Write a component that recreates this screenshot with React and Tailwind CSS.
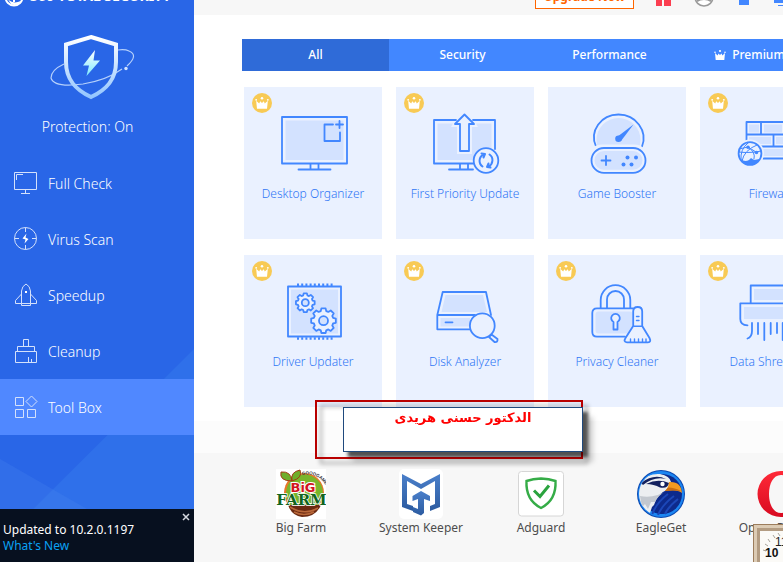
import React from "react";

function Crown({ className }) {
  return (
    <svg viewBox="0 0 12 11" className={className} fill="currentColor">
      <path d="M1 3.5 L3.6 6 L4.5 4 L6 5.5 L7.5 4 L8.4 6 L11 3.5 L10.3 10.5 H1.7 Z" />
      <circle cx="1" cy="2.8" r="0.8" />
      <circle cx="6" cy="1.5" r="1.1" />
      <circle cx="11" cy="2.8" r="0.8" />
    </svg>
  );
}

// Tool icons

function ToolSvg({ children }) {
  return (
    <svg width="80" height="72" viewBox="0 0 80 72" fill="none" stroke="#4287ff" strokeWidth="1.8" strokeLinejoin="round" strokeLinecap="round">
      {children}
    </svg>
  );
}

function DesktopIcon() {
  return (
    <ToolSvg>
      <rect x="9" y="8" width="65" height="46.5" />
      <rect x="12.5" y="11.5" width="58" height="39.5" fill="#d3e2ff" stroke="none" />
      <path d="M37.5 55 V60 M45.5 55 V60 M25.5 60.5 H57.5" />
      <path d="M60 15.5 H51.5 V32 H67 V23.5 M66.5 12 V19 M63 15.5 H70" />
    </ToolSvg>
  );
}

function PriorityIcon() {
  return (
    <ToolSvg>
      <path d="M31 11 H9 V54.5 H50 M48 11 H70 V40 M35 55 V60 M43 55 V60 M24 60.5 H48" />
      <path d="M12.5 14.5 H28 L26 18 H32 V45 H47 V18 H53 L51 14.5 H66.5 V39 Q52 38 48 51 H12.5 Z" fill="#d3e2ff" stroke="none" />
      <path d="M39.5 5.5 L49 15 H44 V42 H35 V15 H30 Z" fill="#eaf1ff" />
      <circle cx="61" cy="51.5" r="12.3" fill="#eaf1ff" />
      <path d="M57.5 57.5 A7 7 0 0 1 58.5 45.5 M56.5 44.5 L60 45 L58.5 48.5 M64.5 45.5 A7 7 0 0 1 63.5 57.5 M65.5 58.5 L62 58 L63.5 54.5" strokeWidth="2" />
    </ToolSvg>
  );
}

function GameIcon() {
  return (
    <ToolSvg>
      <circle cx="41.5" cy="31" r="22" fill="#d3e2ff" stroke="none" />
      <path d="M19 37.5 C12 22 24 5.5 41.5 5.5 S71 22 65 37.5" />
      <path d="M56.5 15.5 L44 32 L40 28 Z" fill="#4287ff" stroke="none" />
      <circle cx="41.5" cy="29.8" r="3.3" fill="#4287ff" stroke="none" />
      <rect x="10" y="35.5" width="62" height="30" rx="15" fill="#eaf1ff" stroke="none" />
      <rect x="14.5" y="39" width="54" height="24.8" rx="12.4" />
      <rect x="17.5" y="42" width="48" height="18.8" rx="9.4" fill="#d3e2ff" stroke="none" />
      <path d="M29 47 V56 M24.5 51.5 H33.5" />
      <g fill="#4287ff" stroke="none">
        <circle cx="50.5" cy="48.5" r="2" />
        <circle cx="59" cy="48.5" r="2" />
        <circle cx="46.5" cy="55.5" r="2" />
        <circle cx="54.5" cy="55.5" r="2" />
      </g>
    </ToolSvg>
  );
}

function FirewallIcon() {
  return (
    <ToolSvg>
      <path d="M20 15.5 h10 v8 h-10z M35 15.5 h18 v8 h-18z M20 28 h22 v7 h-22z M47 28 h18 v7 h-18z M34 40 h30 v7 h-30z" fill="#d3e2ff" stroke="none" />
      <path d="M17.5 32 V13 H76 V49.5 H34 M17.5 25.5 H76 M30 37.5 H76 M32 13 V25.5 M56 13 V25.5 M44.5 25.5 V37.5" />
      <circle cx="21" cy="44.5" r="14" fill="#eaf1ff" stroke="none" />
      <circle cx="21" cy="44.5" r="11.4" fill="#eaf1ff" />
      <g strokeWidth="1">
        <path d="M10 43 Q16 44 27 43 M19 34 Q11 40 12 51 M19 38 Q27 43 25 50 M28 36 Q15 41 13 52 M10 40 L19 38 L27 43 L32 42" />
      </g>
      <path d="M12 50.5 Q16 53 20 51 L22 49 L25 51 L30.5 50 Q27 56 21 56 Q15 56 12 50.5 Z" fill="#4287ff" stroke="none" />
      <circle cx="19" cy="38.3" r="1.8" fill="#4287ff" stroke="none" />
      <circle cx="27.5" cy="43.5" r="1.8" fill="#4287ff" stroke="none" />
    </ToolSvg>
  );
}

// A toothed ring round (cx, cy)
function Gear({ cx, cy, r, hole }) {
  const points = [];
  for (let i = 0; i < 8; i++) {
    const a = (i * Math.PI) / 4;
    [[-0.28, 0.8], [-0.17, 1], [0.17, 1], [0.28, 0.8]].forEach(([d, k]) => {
      points.push(`${(cx + Math.cos(a + d) * r * k).toFixed(2)},${(cy + Math.sin(a + d) * r * k).toFixed(2)}`);
    });
  }
  return (
    <>
      <polygon points={points.join(" ")} fill="#eaf1ff" />
      <circle cx={cx} cy={cy} r={hole} fill="#d3e2ff" />
    </>
  );
}

function DriverIcon() {
  return (
    <ToolSvg>
      <path d="M24 7.8 H61 M24 61.5 H61" strokeWidth="2.4" strokeDasharray="2 2.2" strokeLinecap="butt" />
      <rect x="15" y="9.5" width="53" height="50" fill="#eaf1ff" />
      <rect x="18" y="12.5" width="47" height="44" fill="#d3e2ff" stroke="none" />
      <Gear cx={32.3} cy={25.7} r={9.5} hole={3.5} />
      <Gear cx={50.5} cy={43.7} r={12.5} hole={4.5} />
    </ToolSvg>
  );
}

function DiskIcon() {
  return (
    <ToolSvg>
      <path d="M20.5 18 H58 L62 35 H16.5 Z M15.5 41 H45 V49.5 H15.5 Z" fill="#d3e2ff" stroke="none" />
      <path d="M66 38 L61 15 H17.7 L12.3 38 V52.3 H46 M12.3 38 H50 M20.5 45.3 H27.5" />
      <circle cx="57.3" cy="48.7" r="12.4" fill="#eaf1ff" />
      <path d="M66.5 57.5 L72.5 62 Q73 65.5 69.5 65 L64 60 Z" fill="#eaf1ff" />
    </ToolSvg>
  );
}

function PrivacyIcon() {
  return (
    <ToolSvg>
      <rect x="18.5" y="34.5" width="37" height="22" rx="3" fill="#d3e2ff" stroke="none" />
      <path d="M23.7 31 V23 A14.8 14.8 0 0 1 53.3 23 V31 M30 31 V22.5 A8.5 8.5 0 0 1 47 22.5 V31" />
      <path d="M48 59.7 H20 Q15.3 59.7 15.3 55 V36 Q15.3 31.3 20 31.3 H56" />
      <path d="M36.5 45 A4.3 4.3 0 1 1 40.5 45 V52.5 H36.5 Z" fill="#eaf1ff" />
      <path d="M56.2 49 V34.5 Q56.2 30 60.7 30 Q65.2 30 65.2 34.5 V49 L72.5 61 Q74.5 65.3 71 65.3 H50 Q46 65 48.5 61 Z" fill="#eaf1ff" />
      <path d="M57 49.3 H64.5 M59.5 39.5 H62 M59.5 43.5 H62 M53.5 62 V65 M57.5 62 V65 M61.5 62 V65 M65.5 62 V65 M69 62 V65" strokeWidth="1.4" />
    </ToolSvg>
  );
}

function ShredderIcon() {
  return (
    <ToolSvg>
      <path d="M25 12 H66 V23 H25 Z M15 30 H72 V42 H15 Z" fill="#d3e2ff" stroke="none" />
      <path d="M21.7 26 V8.5 H68 V26 M18.5 48.3 Q11.3 48.3 11.3 42 V26.3 H76 V42 Q76 48.3 70 48.3" />
      <path d="M23 46 V54 Q23 60 18.5 61.5 M29 46 V57 M35.3 46 V63 M41.7 46 V57 M48 46 V56 M53.7 46 V63 M60 46 V57" />
    </ToolSvg>
  );
}

// Sidebar icons

function NavSvg({ children }) {
  return (
    <svg width="28" height="28" viewBox="0 0 28 28" fill="none" stroke="#d4e1fb" strokeWidth="1" className="shrink-0">
      {children}
    </svg>
  );
}

const navItems = [
  {
    label: "Full Check",
    icon: (
      <NavSvg>
        <path d="M2.5 3.5 H24.5 V20.5 H2.5 Z M13.5 20.5 V24.5 M9 24.5 H18 M4.5 11 V5.5 H11" />
      </NavSvg>
    ),
  },
  {
    label: "Virus Scan",
    icon: (
      <NavSvg>
        <circle cx="13.5" cy="13.5" r="11" />
        <path d="M13.5 2.5 V7 M13.5 20 V24.5 M2.5 13.5 H7 M20 13.5 H24.5" />
        <path d="M14.5 8.5 L10.5 13.5 L13.5 14.5 L12.5 18.5 L16.5 14 L13.5 12.5 Z" fill="#fff" stroke="none" />
      </NavSvg>
    ),
  },
  {
    label: "Speedup",
    icon: (
      <NavSvg>
        <path d="M9.5 22.5 V10 Q10 5 14 3 Q18 5 18.5 10 V22.5 Z" />
        <path d="M9.5 13 L3.5 19.5 V22.5 H9.5 M18.5 13 L24.5 19.5 V22.5 H18.5 M9.5 22.5 V24.5 H18.5 V22.5" />
        <rect x="13" y="10" width="2" height="2" fill="#fff" stroke="none" />
      </NavSvg>
    ),
  },
  {
    label: "Cleanup",
    icon: (
      <NavSvg>
        <path d="M11.5 9.5 V2.5 H16.5 V9.5 M5.5 14.5 V9.5 H22.5 V14.5 M3.5 14.5 H24.5 V25.5 H3.5 Z M16.5 25 V20 M19.5 25 V22" />
      </NavSvg>
    ),
  },
  {
    label: "Tool Box",
    active: true,
    icon: (
      <NavSvg>
        <path d="M3.5 4.5 H11.5 V12.5 H3.5 Z M3.5 16.5 H11.5 V24.5 H3.5 Z M15.5 16.5 H23.5 V24.5 H15.5 Z M19.5 3 L25 8.5 L19.5 14 L14 8.5 Z" />
      </NavSvg>
    ),
  },
];

const tabs = ["All", "Security", "Performance", "Premium"];

const tools = [
  { label: "Desktop Organizer", Icon: DesktopIcon, premium: true },
  { label: "First Priority Update", Icon: PriorityIcon, premium: true },
  { label: "Game Booster", Icon: GameIcon },
  { label: "Firewall", Icon: FirewallIcon, premium: true },
  { label: "Driver Updater", Icon: DriverIcon, premium: true },
  { label: "Disk Analyzer", Icon: DiskIcon, premium: true },
  { label: "Privacy Cleaner", Icon: PrivacyIcon, premium: true },
  { label: "Data Shredder", Icon: ShredderIcon, premium: true },
];

// App logos

function BigFarmLogo() {
  return (
    <svg width="50" height="50" viewBox="0 0 50 50">
      <rect width="50" height="50" fill="#fff" />
      <circle cx="28" cy="24" r="20" fill="#e8772a" />
      <circle cx="28.5" cy="24" r="18.5" fill="#7ab52b" />
      <path d="M12 36 H45 Q40 48 26 48 Q16 47 12 36 Z" fill="#6b2a12" />
      <path d="M14 38 Q28 47 42 39 M18 43 Q28 48 38 43" stroke="#b9683a" strokeWidth="1.5" fill="none" />
      <path d="M16 12 Q3 12 5 3 Q15 2 16 12 Z M16 12 Q14 3 24 1 Q27 9 16 12 Z" fill="#6fae2a" stroke="#a33a14" strokeWidth="1" />
      <path id="farmArc" d="M26 6 Q40 3 49 15" fill="none" />
      <text fontFamily="Liberation Sans" fontWeight="bold" fontSize="4.5" fill="#33333a">
        <textPath href="#farmArc">GOODGAME</textPath>
      </text>
      <text x="27" y="22.5" textAnchor="middle" fontFamily="DejaVu Sans" fontWeight="bold" fontSize="13" fill="#d2151e" stroke="#fff" strokeWidth="2" paintOrder="stroke">BiG</text>
      <text x="25.5" y="36" textAnchor="middle" fontFamily="DejaVu Serif" fontWeight="bold" fontSize="15" fill="#12651f" stroke="#fff" strokeWidth="1.5" paintOrder="stroke">FARM</text>
    </svg>
  );
}

function KeeperLogo() {
  return (
    <svg width="44" height="50" viewBox="0 0 44 50">
      <defs>
        <linearGradient id="keeper" x1="0" y1="0" x2="0" y2="1">
          <stop offset="0" stopColor="#4a7fca" />
          <stop offset="1" stopColor="#2c5ba0" />
        </linearGradient>
      </defs>
      <rect width="44" height="50" rx="5" fill="#fff" />
      <path d="M3 5 L22 15 L41 5 V38 L31 42 V37 L36 35 V12 L22 20 L8 12 V35 L14 37 V42 L3 38 Z" fill="url(#keeper)" />
      <path d="M22 22 L31 27 V32 L25 30 V44 L22 46.5 L14 43 V38 L19 40 V30 L13.5 32 V27 Z" fill="url(#keeper)" />
    </svg>
  );
}

function AdguardLogo() {
  return (
    <svg width="46" height="50" viewBox="0 0 46 50" fill="none">
      <rect x="0.5" y="2.5" width="45" height="44.5" rx="3" fill="#fff" stroke="#d6d6d6" />
      <path d="M23 9.5 Q31 9.8 37.5 12 Q38.5 31 23 39 Q7.5 31 8.5 12 Q15 9.8 23 9.5 Z" stroke="#35ac47" strokeWidth="2.4" />
      <path d="M16 21.5 L22 27.5 L31 16.5" stroke="#2aa33e" strokeWidth="3" />
    </svg>
  );
}

function EagleLogo() {
  return (
    <svg width="50" height="50" viewBox="0 0 50 50">
      <defs>
        <clipPath id="eagleClip">
          <circle cx="25" cy="25" r="22" />
        </clipPath>
      </defs>
      <circle cx="25" cy="25" r="24" fill="#0b48b0" />
      <circle cx="25" cy="25" r="23" fill="#1c86f2" />
      <circle cx="26" cy="25" r="20" fill="#0d2a8c" />
      <g clipPath="url(#eagleClip)">
        <path d="M16 46 Q20 34 32 25 M22 46 Q26 36 38 27 M29 45 Q32 38 42 30" stroke="#1c47b8" strokeWidth="2" fill="none" />
        <path d="M2 14 Q12 4 24 5 Q34 7 35 13 L34 20 Q26 22 22 28 L20 31 L18 36 L16 38 L14 44 L8 46 L0 30 Z" fill="#eceef1" />
        <path d="M4 27 Q18 30 32 21 Q22 26 19 33 L15 33 L12 40 L9 35 L6 38 Z" fill="#c3c8d0" />
        <path d="M5 14 Q18 4 30 10 Q18 7 7 16 Z M10 15 Q22 9 33 14 Q32 20 24 18.5 Q18 15 10 15 Z" fill="#12205e" />
      </g>
      <circle cx="26.5" cy="15" r="2.2" fill="#fff" />
      <path d="M33 13 Q45 12 46 24 Q41 20 29 22 Q33 18 33 13 Z" fill="#f29a22" />
      <path d="M32 18.5 Q39 18.5 45 22 Q39 21 29 22 Z" fill="#c96d12" />
    </svg>
  );
}

function OperaLogo() {
  return (
    <svg width="50" height="50" viewBox="0 0 50 50">
      <defs>
        <linearGradient id="opera" x1="0" y1="0" x2="0" y2="1">
          <stop offset="0" stopColor="#ff2a38" />
          <stop offset="1" stopColor="#d80a20" />
        </linearGradient>
      </defs>
      <path fillRule="evenodd" fill="url(#opera)" d="M25 2 A23.500 23 0 1 1 25 48 A23.500 23 0 1 1 25 2 Z M25 6 C17 6 13 15 13 25 S17 44 25 44 S37 35 37 25 S33 6 25 6 Z" />
    </svg>
  );
}

const apps = [
  { label: "Big Farm", Logo: BigFarmLogo },
  { label: "System Keeper", Logo: KeeperLogo },
  { label: "Adguard", Logo: AdguardLogo },
  { label: "EagleGet", Logo: EagleLogo },
  { label: "Opera Browser", Logo: OperaLogo },
];

function ShieldLogo() {
  return (
    <svg width="88" height="68" viewBox="0 0 88 68" fill="none">
      <defs>
        <linearGradient id="shield" x1="0" y1="0" x2="0" y2="1">
          <stop offset="0" stopColor="#ffffff" />
          <stop offset="1" stopColor="#94c6ff" />
        </linearGradient>
        <linearGradient id="bolt" x1="0" y1="0" x2="0" y2="1">
          <stop offset="0" stopColor="#ffffff" />
          <stop offset="1" stopColor="#7deaff" />
        </linearGradient>
      </defs>
      <path d="M17 32 Q4 38 4 46 Q7 56 36 52 Q60 48 75 37 M80 34 Q92 23 82 19 Q78 17 71 18" stroke="#b5d0fb" strokeWidth="1.2" />
      <path d="M44 5 L69 12.5 V30 C69 48 59 58 44 65 C29 58 19 48 19 30 V12.5 Z" stroke="url(#shield)" strokeWidth="4" />
      <path d="M48 18 L36 33.5 H42 L39.5 44 L53 28.5 H46.5 Z" fill="url(#bolt)" />
      <circle cx="79" cy="36.5" r="1.7" fill="#d6e6ff" />
    </svg>
  );
}

function Sidebar() {
  return (
    <aside className="relative flex w-[194px] shrink-0 flex-col bg-[#2966e7] text-white">
      {/* angled light bands near the bottom */}
      <svg className="absolute bottom-0 left-0" width="194" height="216" viewBox="0 0 194 216">
        <path d="M194 3 L0 196 V216 H194 Z" fill="#2f70ea" />
        <path d="M0 113 L120 182 V216 H0 Z" fill="#4a88f0" fillOpacity="0.25" />
      </svg>

      <div className="relative flex h-4 items-end gap-1.5 overflow-hidden pl-1">
        <svg width="20" height="20" viewBox="0 0 20 20" fill="none" className="mb-[9px] shrink-0">
          <circle cx="10" cy="10" r="8.5" stroke="#fff" strokeWidth="2" />
          <path d="M3 11 Q8 18 17 14 Q12 20 7 17 Z M9 9 H11 V15 H9 Z" fill="#fff" />
        </svg>
        <h1 className="mb-[10px] text-sm leading-5 font-bold whitespace-nowrap">360 TOTAL SECURITY</h1>
      </div>

      <div className="relative flex h-[139px] flex-col items-center pt-4 pr-3">
        <ShieldLogo />
        <p className="mt-[17px] pr-[7px] text-sm leading-5 font-light">Protection: On</p>
      </div>

      <nav className="relative flex-1">
        {navItems.map((item) => (
          <button
            key={item.label}
            className={`flex h-14 w-full items-center gap-2 pl-3 text-left text-sm font-light ${item.active ? "bg-[#5088ff]" : ""}`}
          >
            {item.icon}
            <span className="pt-0.5">{item.label}</span>
          </button>
        ))}
      </nav>

      <div className="relative bg-[#07101f] px-[3px] pt-3 pb-2 text-xs">
        <button aria-label="Close" className="absolute top-1 right-1 flex size-2">
          <svg viewBox="0 0 8 8" className="size-2" stroke="#d5d9e0" strokeWidth="1.5">
            <path d="M1 1 L7 7 M7 1 L1 7" />
          </svg>
        </button>
        <p className="pt-px leading-4">Updated to 10.2.0.1197</p>
        <a href="#" className="block leading-4 text-[#0aa2f5]">What's New</a>
      </div>
    </aside>
  );
}

function TopBar() {
  return (
    <header className="flex h-[15px] items-end overflow-hidden bg-[#f7f7f7] pl-[341px]">
      <button className="mb-[6px] h-6 w-[99px] shrink-0 border border-[#ff6600] bg-white text-xs leading-5 font-bold text-[#ff6600]">
        Upgrade Now
      </button>
      <svg width="16" height="16" viewBox="0 0 16 16" className="mb-2 ml-[21px] shrink-0" fill="#fb3e50">
        <path d="M1 0 H7 V15 H1 Z M9 0 H16 V15 H9 Z" />
      </svg>
      <svg width="20" height="20" viewBox="0 0 20 20" className="mb-2 ml-[23px] shrink-0">
        <circle cx="10" cy="10" r="9" fill="#fff" stroke="#999" strokeWidth="1.5" />
        <path d="M1.5 12 L3.5 15 Q6 13 10 13 Q14 13 16.5 15 L18.5 12 Z" fill="#999" />
      </svg>
      <svg width="12" height="12" viewBox="0 0 12 12" className="mb-[10px] ml-6 shrink-0" fill="#4287ff">
        <rect x="1" width="10" height="12" />
      </svg>
      <svg width="16" height="16" viewBox="0 0 16 16" className="mb-2 ml-6 shrink-0" fill="#4287ff">
        <path d="M0 0 H16 V12 H0 Z M4 14 H12 V15 H4 Z" />
      </svg>
    </header>
  );
}

function ToolCard({ label, Icon, premium }) {
  return (
    <button className="relative flex h-[152px] flex-col items-center bg-[#eaf1ff] pt-[22px] text-[#2f76f5]">
      {premium && (
        <span className="absolute top-1.5 left-2 flex size-5 items-center justify-center rounded-full bg-[#f8ca55] text-white">
          <Crown className="size-3.5" />
        </span>
      )}
      <Icon />
      <span className="mt-[5px] text-xs leading-4 font-light whitespace-nowrap">{label}</span>
    </button>
  );
}

function Signature() {
  return (
    <div className="absolute top-[400px] left-[121px] w-[268px]">
      <div className="border-2 border-[#b90000] pt-[5px] pb-[5px] pl-[26px] drop-shadow-[5px_5px_2px_rgba(0,0,0,0.35)]">
        <p
          dir="rtl"
          className="-mr-[2px] h-[45px] border border-[#1f497d] bg-white text-center font-['DejaVu_Sans',sans-serif] text-[13px] leading-5 font-bold text-[#ff0000] shadow-[5px_5px_3px_rgba(0,0,0,0.5)]"
        >
          الدكتور حسنى هريدى
        </p>
      </div>
    </div>
  );
}

function ClockGadget() {
  return (
    <div className="absolute right-0 bottom-0 h-[38px] w-[30px] overflow-hidden">
      <svg width="30" height="38" viewBox="0 0 30 38">
        <rect width="30" height="38" fill="#9c7d5c" />
        <path d="M1 1 H30 V4 H4 V38 H1 Z" fill="#dccbb4" />
        <path d="M4 4 H30 V7 H7 V38 H4 Z" fill="#b39c82" />
        <rect x="7" y="7" width="23" height="31" fill="#fbfaf7" />
        <path d="M10 26 L13 27 M12 20 L15 22 M15 15 L17 18 M20 11 L22 14 M25 9 L27 12" stroke="#a8a49b" strokeWidth="1" />
        <text x="22" y="22" fontFamily="Liberation Sans" fontSize="12" fill="#222">11</text>
        <text x="12" y="33" fontFamily="Liberation Sans" fontWeight="bold" fontSize="12" fill="#111">10</text>
      </svg>
    </div>
  );
}

export default function App() {
  return (
    <div className="relative flex min-h-screen w-full overflow-hidden bg-white font-['Noto_Sans',sans-serif]">
      <Sidebar />

      <main className="relative flex min-w-0 flex-1 flex-col overflow-hidden">
        <TopBar />

        <div className="grid w-max grid-cols-[repeat(4,147px)] pt-6 pl-12">
          {tabs.map((tab, i) => (
            <button
              key={tab}
              className={`flex h-8 items-center justify-center gap-1.5 text-xs font-medium text-white ${i === 0 ? "bg-[#2f6bd8]" : "bg-[#4287ff]"} ${tab === "Premium" ? "pr-[14px]" : ""}`}
            >
              {tab === "Premium" && <Crown className="size-3" />}
              {tab}
            </button>
          ))}
        </div>

        <section className="grid w-max grid-cols-[repeat(4,138px)] gap-x-[14px] gap-y-4 pt-4 pb-[14px] pl-[50px]">
          {tools.map((tool) => (
            <ToolCard key={tool.label} {...tool} />
          ))}
        </section>

        <div className="h-8 bg-[#fcfcfc]" />

        <footer className="flex-1 bg-[#f7f7f7]">
          <div className="grid w-max grid-cols-[repeat(5,120px)] pt-4 pl-[47px]">
            {apps.map(({ label, Logo }) => (
              <a key={label} href="#" className="flex flex-col items-center text-xs text-[#4d4d4d]">
                <Logo />
                <span className="pt-px leading-4">{label}</span>
              </a>
            ))}
          </div>
        </footer>

        <Signature />
      </main>

      <ClockGadget />
    </div>
  );
}
